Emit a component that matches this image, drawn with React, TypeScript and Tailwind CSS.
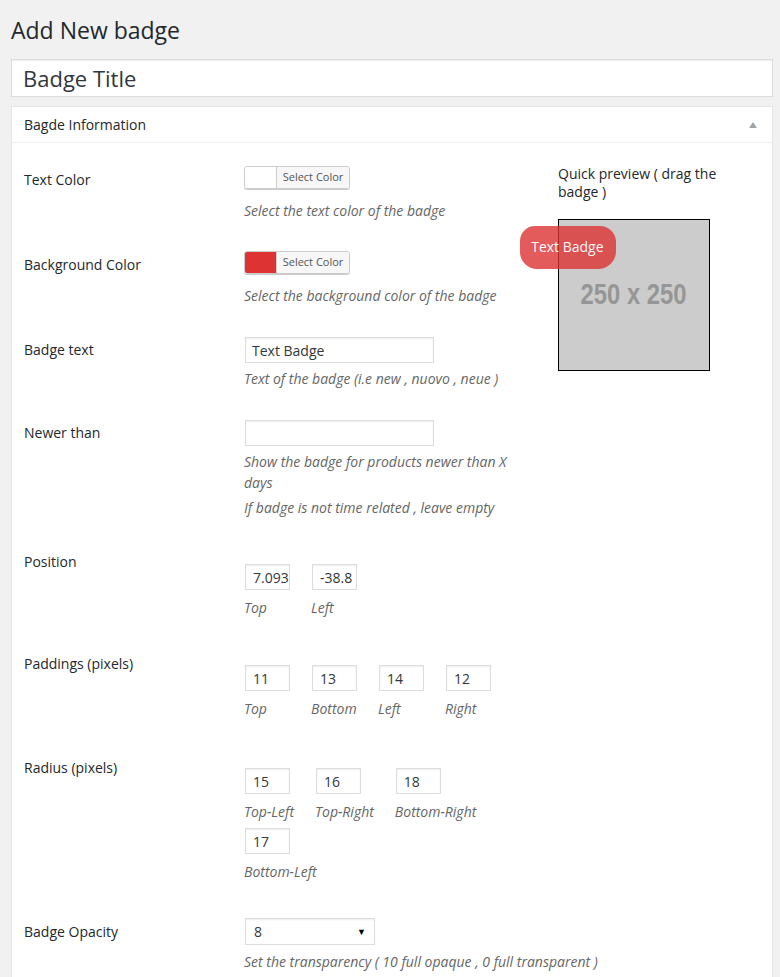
import React from "react";

const font = { fontFamily: '"Open Sans", "Noto Sans", sans-serif' };

function Label({ text }: { text: string }) {
    return (
        <div className="w-[220px] shrink-0 pt-[20px] text-[14px] leading-[18px] text-[#23282d]">
            {text}
        </div>
    );
}

function Desc({ children, className = "" }: { children: React.ReactNode; className?: string }) {
    return <p className={`text-[14px] leading-[21px] italic text-[#666] ${className}`}>{children}</p>;
}

function ColorPicker({ swatch }: { swatch: string }) {
    return (
        <div className="flex h-[23px] w-[106px] overflow-hidden rounded-[3px] border border-[#ccc] shadow-[0_1px_0_#ccc]">
            <div className={`w-[31px] ${swatch}`} />
            <div className="flex flex-1 items-center justify-center border-l border-[#ccc] bg-[#f7f7f7] text-[11px] text-[#555]">
                Select Color
            </div>
        </div>
    );
}

function TextInput({ value = "", className = "" }: { value?: string; className?: string }) {
    return (
        <div
            className={`ml-[1px] flex items-center border border-[#ddd] bg-white pl-[6px] text-[14px] text-[#32373c] shadow-[inset_0_1px_2px_rgba(0,0,0,0.07)] overflow-hidden whitespace-nowrap ${className}`}
        >
            {value}
        </div>
    );
}

function NumberField({ value, label }: { value: string; label: string }) {
    return (
        <div className="mr-[21px] flex flex-col">
            <TextInput value={value} className="h-[26px] w-[45px] pl-[7px]" />
            <Desc className="mt-[7px]">{label}</Desc>
        </div>
    );
}

function Row({ label, children }: { label: string; children: React.ReactNode }) {
    return (
        <div className="flex">
            <Label text={label} />
            <div className="w-[290px] py-[15px]">{children}</div>
        </div>
    );
}

export default function App() {
    return (
        <div className="min-h-[977px] bg-[#f1f1f1] pl-[11px] pr-[7px]" style={font}>
            <h1 className="pt-[14px] pb-[13px] text-[23px] leading-[32px] text-[#23282d]">Add New badge</h1>

            {/* title field */}
            <div className="flex h-[38px] items-center border border-[#ddd] bg-white px-[11px] text-[22px] text-[#32373c] shadow-[inset_0_1px_2px_rgba(0,0,0,0.07)]">
                Badge Title
            </div>

            {/* badge information box */}
            <div className="mt-[9px] border border-[#e5e5e5] bg-white shadow-[0_1px_1px_rgba(0,0,0,0.04)]">
                <div className="flex h-[36px] items-center justify-between border-b border-[#eee] px-[12px] text-[14px] text-[#23282d]">
                    <span>Bagde Information</span>
                    <svg width="8" height="6" viewBox="0 0 8 6" className="mr-[3px]">
                        <path d="M4 0 L8 6 L0 6 Z" fill="#a0a5aa" />
                    </svg>
                </div>

                <div className="px-[12px] pt-[8px] pb-[20px]">
                    <div className="flex">
                        <div className="flex flex-col">
                            <Row label="Text Color">
                                <ColorPicker swatch="bg-white" />
                                <Desc className="mt-[11px]">Select the text color of the badge</Desc>
                            </Row>
                            <Row label="Background Color">
                                <ColorPicker swatch="bg-[#dd3333]" />
                                <Desc className="mt-[11px] whitespace-nowrap">Select the background color of the badge</Desc>
                            </Row>
                            <Row label="Badge text">
                                <TextInput value="Text Badge" className="mt-[1px] h-[26px] w-[189px]" />
                                <Desc className="mt-[5px]">Text of the badge (i.e new , nuovo , neue )</Desc>
                            </Row>
                            <Row label="Newer than">
                                <TextInput className="mt-[1px] h-[26px] w-[189px]" />
                                <Desc className="mt-[5px]">Show the badge for products newer than X days</Desc>
                                <Desc className="mt-[4px]">If badge is not time related , leave empty</Desc>
                            </Row>
                            <Row label="Position">
                                <div className="mt-[16px] mb-[2px] flex">
                                    <NumberField value="7.093" label="Top" />
                                    <NumberField value="-38.8" label="Left" />
                                </div>
                            </Row>
                            <Row label="Paddings (pixels)">
                                <div className="mt-[15px] mb-[5px] flex">
                                    <NumberField value="11" label="Top" />
                                    <NumberField value="13" label="Bottom" />
                                    <NumberField value="14" label="Left" />
                                    <NumberField value="12" label="Right" />
                                </div>
                            </Row>
                            <Row label="Radius (pixels)">
                                <div className="mt-[14px] flex flex-wrap gap-y-[6px] pb-[6px]">
                                    <NumberField value="15" label="Top-Left" />
                                    <NumberField value="16" label="Top-Right" />
                                    <NumberField value="18" label="Bottom-Right" />
                                    <NumberField value="17" label="Bottom-Left" />
                                </div>
                            </Row>
                        </div>

                        {/* quick preview */}
                        <div className="ml-[24px] w-[180px] pt-[14px]">
                            <div className="text-[14px] leading-[18px] text-[#23282d]">Quick preview ( drag the badge )</div>
                            <div className="relative mt-[18px] flex h-[152px] w-[152px] items-center justify-center border border-black bg-[#cccccc]">
                                <span
                                    className="inline-block scale-x-[0.82] text-[29px] font-bold text-[#969696]"
                                    style={{ fontFamily: '"Liberation Sans", Arial, sans-serif' }}
                                >
                                    250 x 250
                                </span>
                                <div className="absolute top-[6px] left-[-38.8px] whitespace-nowrap rounded-tl-[15px] rounded-tr-[16px] rounded-br-[18px] rounded-bl-[17px] bg-[#dd3333] pt-[11px] pr-[12px] pb-[13px] pl-[11px] text-[14px] leading-[19px] text-white opacity-80">
                                    Text Badge
                                </div>
                            </div>
                        </div>
                    </div>

                    <div className="flex">
                        <Label text="Badge Opacity" />
                        <div className="py-[15px]">
                            <div className="ml-[1px] flex h-[27px] w-[130px] items-center justify-between border border-[#ddd] bg-white px-[8px] text-[14px] text-[#32373c] shadow-[inset_0_1px_2px_rgba(0,0,0,0.07)]">
                                <span>8</span>
                                <span className="text-[9px] text-black">▼</span>
                            </div>
                            <Desc className="mt-[6px]">Set the transparency ( 10 full opaque , 0 full transparent )</Desc>
                        </div>
                    </div>
                </div>
            </div>
        </div>
    );
}
